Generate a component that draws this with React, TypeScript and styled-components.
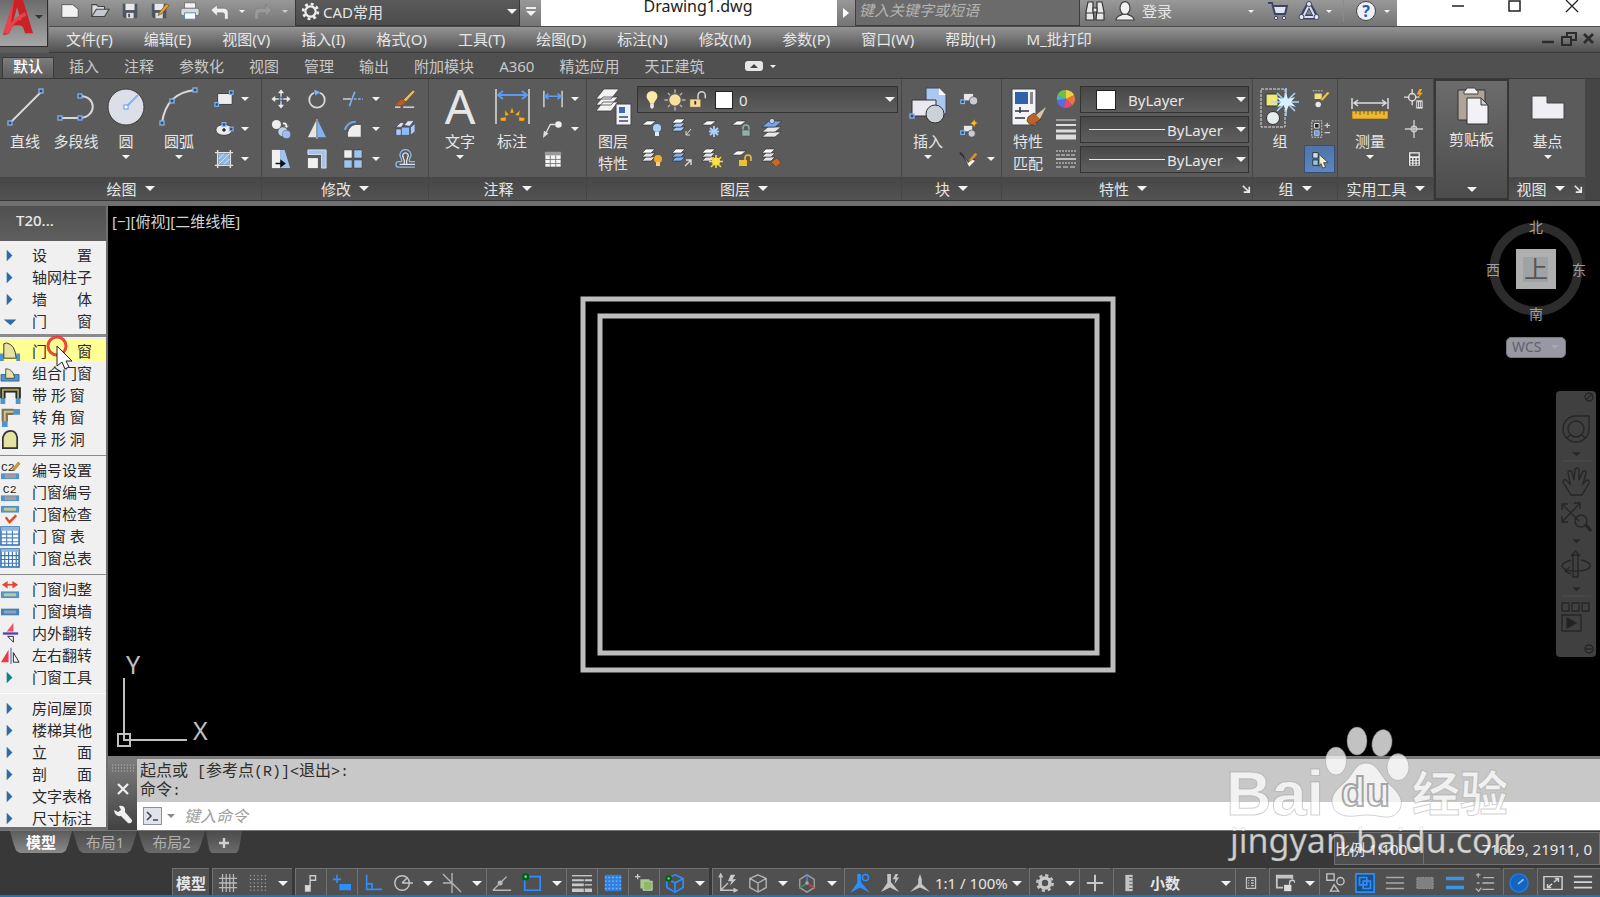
import React from "react";
import styled, { createGlobalStyle, css } from "styled-components";

const UI = `"Noto Sans", "Noto Sans CJK SC", sans-serif`;

const Global = createGlobalStyle`
  *, *::before, *::after { box-sizing: border-box; }
  html, body { margin: 0; height: 100%; overflow: hidden; background: #383838; }
  body { font-family: ${UI}; font-size: 15px; line-height: 22px; color: #e6e6e6; }
  button, select, input { font: inherit; color: inherit; background: none; border: 0; padding: 0; margin: 0; border-radius: 0; outline: none; }
  select { appearance: none; }
  svg { display: block; flex: none; }
`;

/* ---------- shell ---------- */
const Shell = styled.div`
  position: relative;
  display: flex;
  flex-direction: column;
  height: 100vh;
  overflow: hidden;
`;
const Header = styled.header`
  display: grid;
  grid-template-columns: 49px 1fr;
  grid-template-rows: 27px 26px;
`;
const LogoCell = styled.div`
  grid-row: 1 / 3;
  background: linear-gradient(#8a8a8a, #5a5a5a);
`;
const LogoButton = styled.button`
  display: flex;
  align-items: center;
  justify-content: space-between;
  width: 48px;
  height: 47px;
  padding: 0 4px 12px 2px;
  background: linear-gradient(#6c6c6c, #a6a6a6);
  border-right: 1px solid #2d2d2d;
  border-bottom: 1px solid #2d2d2d;
`;
const TitleBar = styled.div`
  display: flex;
  align-items: stretch;
  background: linear-gradient(#989898, #747474);
  border-bottom: 1px solid #4a4a4a;
`;
const QuickAccess = styled.div`
  display: flex;
  align-items: center;
  width: 246px;
  padding: 0 0 4px 6px;
`;
const IconButton = styled.button<{ $w?: number }>`
  display: flex;
  align-items: center;
  justify-content: center;
  width: ${(p) => p.$w ?? 30}px;
`;
const Caret = styled.span<{ $s?: number; $c?: string }>`
  flex: none;
  width: 0;
  height: 0;
  border-style: solid;
  border-color: ${(p) => p.$c ?? "#f2f2f2"} transparent transparent;
  border-width: ${(p) => p.$s ?? 5}px ${(p) => p.$s ?? 5}px 0;
`;
const Workspace = styled.label`
  display: flex;
  align-items: center;
  gap: 3px;
  width: 225px;
  padding: 0 2px 2px 5px;
  background: linear-gradient(#5a5a5a, #4c4c4c);
  border: 1px solid #383838;
  border-top: 0;
  select { flex: 1; }
`;
const Customize = styled.button`
  display: flex;
  flex-direction: column;
  align-items: center;
  justify-content: center;
  gap: 2px;
  width: 21px;
  padding-bottom: 4px;
  &::before { content: ""; width: 10px; height: 2px; background: #eee; }
`;
const DocTitle = styled.div`
  flex: 1;
  background: #fff;
  color: #222;
  font-size: 16px;
  line-height: 13px;
  text-align: center;
  padding-left: 18px;
`;
const Expand = styled.button`
  width: 18px;
  display: flex;
  align-items: center;
  justify-content: center;
`;
const Search = styled.input`
  width: 225px;
  padding: 0 3px 6px 3px;
  background: #6b6b6b;
  border: 1px solid #3e3e3e;
  border-top: 0;
  font-style: italic;
  &::placeholder { color: #b4b4b4; opacity: 1; }
`;
const Account = styled.div`
  display: flex;
  align-items: center;
  width: 317px;
  padding-bottom: 4px;
`;
const SignIn = styled.button`
  display: flex;
  align-items: center;
  justify-content: space-between;
  width: 122px;
  padding: 0 8px 0 2px;
`;
const Divider = styled.span`
  width: 1px;
  height: 22px;
  margin: 0 9px;
  background: #8a8a8a;
`;
const WindowButtons = styled.div`
  display: flex;
  width: 203px;
  background: #fff;
  padding: 0 0 13px 32px;
`;
const MenuBar = styled.nav`
  display: flex;
  align-items: center;
  gap: 31px;
  padding: 0 5px 2px 17px;
  background: linear-gradient(#949494, #505050);
  border-bottom: 1px solid #3a3a3a;
  button { white-space: nowrap; }
`;
const ChildWindow = styled.div`
  display: flex;
  align-items: center;
  gap: 6px;
  margin-left: auto;
`;

/* ---------- ribbon ---------- */
const TabBar = styled.div`
  display: flex;
  align-items: flex-end;
  flex: none;
  height: 26px;
  padding-left: 2px;
  background: #505050;
  border-bottom: 1px solid #3a3a3a;
`;
const Tab = styled.button<{ $on?: boolean }>`
  height: 21px;
  margin-right: 5px;
  padding: 0 10px 4px;
  line-height: 16px;
  color: #c8c8c8;
  ${(p) =>
    p.$on &&
    css`
      color: #fff;
      font-weight: 500;
      background: linear-gradient(#7c7c7c, #5d5d5d);
      border: 1px solid #3a3a3a;
      border-bottom: 0;
    `}
`;
const TabToggle = styled.button`
  display: flex;
  align-items: center;
  gap: 7px;
  height: 24px;
  margin-left: 26px;
`;
const Ribbon = styled.section`
  display: flex;
  flex: none;
  height: 122px;
  background: #454545;
  border-bottom: 1px solid #363636;
`;
const Panel = styled.div<{ $w: number }>`
  display: flex;
  flex-direction: column;
  width: ${(p) => p.$w}px;
  background: #5b5b5b;
  border-right: 1px solid #464646;
`;
const PanelBody = styled.div<{ $pad?: number }>`
  display: flex;
  flex: 1;
  padding: 5px 0 0 ${(p) => p.$pad ?? 0}px;
`;
const PanelTitle = styled.button`
  display: flex;
  align-items: center;
  justify-content: center;
  gap: 8px;
  height: 23px;
  background: linear-gradient(#474747, #525252);
  & > svg { margin-right: -6px; }
`;
const Launcher = styled.span<{ $offset: number }>`
  width: 0;
  svg { margin-left: ${(p) => p.$offset}px; }
`;
const Big = styled.button<{ $w: number }>`
  display: flex;
  flex-direction: column;
  align-items: center;
  flex: none;
  align-self: flex-start;
  width: ${(p) => p.$w}px;
  padding-top: 3px;
  white-space: nowrap;
  & > svg { margin-bottom: 3px; }
`;
const BigCaret = styled(Caret)`
  margin-top: 3px;
`;
const Tools = styled.div<{ $cols: string }>`
  display: grid;
  grid-template-columns: ${(p) => p.$cols};
  grid-auto-rows: 30px;
  align-content: start;
  button {
    display: flex;
    align-items: center;
    justify-content: center;
  }
`;
const ToolActive = styled.button`
  margin: 1px 0;
  background: linear-gradient(#4f74a8, #5f86bd);
  border: 1px solid #34507a;
`;
const LayerCol = styled.div`
  flex: 1;
  padding: 2px 3px 0 0;
`;
const Combo = styled.label`
  display: flex;
  align-items: center;
  height: 27px;
  padding: 0 2px 0 8px;
  background: linear-gradient(#484848, #5e5e5e);
  border: 1px solid #333;
  select { flex: 1; min-width: 0; }
`;
const LayerCombo = styled(Combo)`
  padding-left: 4px;
`;
const ComboStack = styled.div`
  display: flex;
  flex-direction: column;
  gap: 3px;
  flex: 1;
  padding: 2px 3px 0 0;
`;
const Swatch = styled.span<{ $s: number; $m: string }>`
  flex: none;
  width: ${(p) => p.$s}px;
  height: ${(p) => p.$s}px;
  margin: ${(p) => p.$m};
  background: #fff;
  border: 1px solid #222;
`;
const LineSample = styled.span`
  width: 76px;
  height: 1px;
  margin-right: 2px;
  background: #e8e8e8;
`;
const ClipPanel = styled.button`
  display: flex;
  flex-direction: column;
  align-items: center;
  width: 75px;
  padding: 5px 0 6px;
  background: linear-gradient(#6c6c6c, #4c4c4c);
  border: 2px solid #363636;
  & > svg { margin-bottom: 2px; }
  & > span:last-child { margin-top: auto; }
`;
const Strip = styled.div`
  flex: none;
  height: 5px;
  background: #707070;
`;

/* ---------- workspace ---------- */
const Main = styled.main`
  display: flex;
  flex: 1;
  min-height: 0;
  border-bottom: 1px solid #777;
`;
const Sidebar = styled.aside`
  position: relative;
  display: flex;
  flex-direction: column;
  width: 108px;
  flex: none;
  background: #f0f0f0;
  border-right: 2px solid #6e6e6e;
  border-bottom: 3px solid #6e6e6e;
  color: #2a2a2a;
  overflow: hidden;
`;
const SideTitle = styled.div`
  flex: none;
  height: 35px;
  padding: 3px 0 0 16px;
  background: linear-gradient(#505050, #5f5f5f);
  color: #e8e8e8;
  font-weight: 500;
`;
const SideGroup = styled.div<{ $top?: string }>`
  flex: none;
  padding: 3px 0 ${(p) => (p.$top ? 5 : 2)}px;
  border-top: ${(p) => p.$top ?? "0"};
`;
const SideRow = styled.button<{ $on?: boolean }>`
  display: flex;
  align-items: center;
  width: 100%;
  height: 22px;
  white-space: pre;
  background: ${(p) => (p.$on ? "#ffff94" : "none")};
  & > span { width: 32px; display: flex; }
`;
const Pointer = styled.svg`
  position: absolute;
  left: 44px;
  top: 129px;
`;
const Work = styled.div`
  display: flex;
  flex-direction: column;
  flex: 1;
  min-width: 0;
`;
const Canvas = styled.div`
  position: relative;
  flex: 1;
  background: #000;
  overflow: hidden;
`;
const ViewLabel = styled.div`
  padding: 4px;
  color: #d4d4d4;
`;
const Placed = styled.div<{ $at: string }>`
  position: absolute;
  inset: ${(p) => p.$at};
`;
const Wcs = styled.button`
  display: flex;
  align-items: center;
  justify-content: space-between;
  width: 60px;
  height: 21px;
  padding: 0 6px 2px 5px;
  border-radius: 5px;
  background: #9898a3;
  border: 1px solid #777783;
  color: #60606c;
  font-size: 14px;
`;
const CommandBox = styled.section`
  display: grid;
  grid-template-columns: 29px 1fr;
  flex: none;
  height: 74px;
  border-top: 3px solid #7a7a7a;
`;
const CommandGrip = styled.div`
  display: flex;
  flex-direction: column;
  align-items: center;
  justify-content: space-between;
  padding: 5px 0 5px;
  background: linear-gradient(#7d7d7d, #424242);
`;
const CommandMain = styled.div`
  display: flex;
  flex-direction: column;
  background: #fff;
`;
const History = styled.div`
  height: 43px;
  padding: 4px 3px 0;
  background: #c8c8c8;
  color: #2e2e2e;
  font: 16px/19px "Liberation Mono", "Noto Sans CJK SC", monospace;
  white-space: pre;
`;
const Latin = styled.span`
  font-size: 15px;
`;
const Prompt = styled.label`
  display: flex;
  flex: 1;
  align-items: center;
  gap: 5px;
  padding-left: 6px;
  color: #333;
  input {
    flex: 1;
    margin-left: 4px;
    font-style: italic;
    font-size: 16px;
  }
  input::placeholder { color: #a0a0a0; opacity: 1; }
`;

/* ---------- footer ---------- */
const SheetRow = styled.div`
  display: flex;
  justify-content: space-between;
  flex: none;
  height: 37px;
`;
const Sheets = styled.div`
  display: flex;
  padding-left: 10px;
`;
const Sheet = styled.button<{ $on?: boolean; $w: number }>`
  width: ${(p) => p.$w}px;
  height: 22px;
  line-height: 22px;
  margin-right: 1px;
  color: ${(p) => (p.$on ? "#fff" : "#b0b0b0")};
  font-weight: ${(p) => (p.$on ? 700 : 400)};
  background: ${(p) => (p.$on ? "linear-gradient(#5c5c5c, #8a8a8a)" : "linear-gradient(#4c4c4c, #6a6a6a)")};
  clip-path: polygon(0 0, 100% 0, 94% 60%, 90% 90%, 84% 100%, 16% 100%, 10% 90%, 6% 60%);
`;
const Readout = styled.div`
  display: flex;
  width: 266px;
  height: 33px;
  margin-top: 1px;
  background: #4e4e4e;
  border: 1px solid #707070;
  white-space: nowrap;
`;
const Coordinates = styled.span`
  flex: 1;
  padding-right: 7px;
  text-align: right;
  line-height: 32px;
  border-left: 1px solid #707070;
`;
const ScaleButton = styled.button`
  display: flex;
  align-items: center;
  gap: 5px;
  width: 88px;
`;
const StatusBar = styled.footer`
  display: flex;
  justify-content: flex-end;
  flex: none;
  height: 29px;
  background: linear-gradient(90deg, #383838 50%, #505050 50%);
  border-bottom: 2px solid #1f74b5;
`;
const StatusGroup = styled.div<{ $gap?: boolean }>`
  display: flex;
  align-items: center;
  flex: none;
  margin-left: ${(p) => (p.$gap ? 3 : 0)}px;
  background: #505050;
  border: 1px solid #727272;
  border-width: 1px 0 0 1px;
  button, select { height: 26px; padding-top: 2px; }
  &:last-child { padding-right: 2px; }
`;
const Model = styled.button`
  width: 36px;
  font-weight: 700;
`;
const Zoom = styled.button`
  width: 72px;
  white-space: nowrap;
`;
const Units = styled.select`
  width: 72px;
  padding-left: 6px;
  font-weight: 700;
`;
const Watermark = styled.div`
  position: absolute;
  right: 86px;
  bottom: 30px;
  width: 288px;
  height: 148px;
  pointer-events: none;
`;

/* ---------- drawings ---------- */
const B = "#7fb3f2";
const W = "#e4e4e8";
const N = ({ x, y }: { x: number; y: number }) => (
  <rect x={x - 2} y={y - 2} width="4" height="4" fill="#3c4c66" stroke={B} strokeWidth="1.3" />
);
const Sheet3 = ({ c = W }: { c?: string }) => (
  <g fill={c} stroke="#2e2e2e" strokeWidth=".6">
    <path d="M1 14h9l4-4H5z" />
    <path d="M1 10h9l4-4H5z" />
    <path d="M1 6h9l4-4H5z" fill="#fff" />
  </g>
);
const Sheet1 = () => <path d="M1 8h9l5-4H6z" fill="#fff" stroke="#2e2e2e" strokeWidth=".6" />;

const art: Record<string, React.ReactNode> = {
  /* quick access */
  new: <path d="M2 4h12l6 5v9H2z" fill="#f2f2f2" stroke="#555" />,
  open: <g stroke="#444" strokeWidth="1.2"><path d="M2 17V4h5l2 2h7v4" fill="#dcdcdc" /><path d="M2 17 7 9h14l-5 8z" fill="#c4c8cf" /></g>,
  save: <g><path d="M3 3h16v16H5l-2-2z" fill="#4d5561" /><path d="M6 3h10v7H6z" fill="#e8e8e8" /><path d="M7 13h8v6H7z" fill="#ddd" /><path d="M9 14h2v4H9z" fill="#4d5561" /></g>,
  saveas: <g><path d="M2 3h16v16H4l-2-2z" fill="#4d5561" /><path d="M5 3h10v7H5z" fill="#e8e8e8" /><path d="M6 13h8v6H6z" fill="#ddd" /><path d="m10 13 8-10 3 2-8 9-4 2z" fill="#e0a040" stroke="#6b4a1c" strokeWidth=".7" /></g>,
  print: <g><path d="M5 2h12v6H5z" fill="#f4f4f4" stroke="#555" strokeWidth=".7" /><rect x="1" y="8" width="20" height="8" rx="2" fill="#dadada" stroke="#555" strokeWidth=".7" /><path d="M5 13h12v7H5z" fill="#fff" stroke="#4f7fc0" /></g>,
  undo: <path d="M1 10 8 4v4h7q5 0 5 5v7h-4v-5q0-2-2-2H8v4z" fill="#eee" stroke="#666" strokeWidth=".6" />,
  redo: <path d="m21 10-7-6v4H7q-5 0-5 5v7h4v-5q0-2 2-2h6v4z" fill="#9a9a9a" stroke="#777" strokeWidth=".6" />,
  gear: <g fill="none" stroke="#eee"><circle cx="11" cy="11" r="6" strokeWidth="2.6" /><circle cx="11" cy="11" r="8.6" strokeWidth="3" strokeDasharray="3.4 3.35" /></g>,
  bino: <g fill="#e8e8e8" stroke="#333" strokeWidth="1.2"><path d="M4 2h5v7l1 11H2V12z" /><path d="M18 2h-5v7l-1 11h8V12z" /><path d="M2 13h8M12 13h8" /><path d="M9 8h4v4H9z" /></g>,
  user: <g fill="#f2f2f2" stroke="#444" strokeWidth="1.2"><path d="M2 20c0-4 4-4 7-6h4c3 2 7 2 7 6z" /><ellipse cx="11" cy="8" rx="5" ry="6.4" /></g>,
  cart: <g fill="none" stroke="#3c4366"><path d="M1 3h4l3 11h10l2-8H7" strokeWidth="2" fill="#e4e4ee" /><circle cx="9" cy="18" r="1.6" fill="#fff" /><circle cx="17" cy="18" r="1.6" fill="#fff" /></g>,
  tri: <g fill="none"><path d="M11 4 4 17h14z" stroke="#3c4366" strokeWidth="5" strokeLinejoin="round" /><path d="M11 5 5 17h12z" stroke="#e0e0ec" strokeWidth="2" strokeLinejoin="round" /><g fill="#e8e8f2" stroke="#3c4366"><circle cx="11" cy="4" r="2.5" /><circle cx="3.5" cy="17" r="2.5" /><circle cx="18.5" cy="17" r="2.5" /></g></g>,
  /* draw */
  rect: <g><path d="M4 5h16v12H4z" fill="#ececf0" stroke="#3a3a3a" /><N x={19} y={4} /><N x={3} y={17} /></g>,
  ellipse: <g><ellipse cx="11" cy="12" rx="9" ry="6" fill="#ececf0" stroke="#3a3a3a" /><path d="M9 12h4M11 10v4" stroke="#222" strokeWidth="1.6" /><N x={11} y={6} /><N x={19} y={11} /></g>,
  hatch: <g><path d="M5 5h12v12H5z" fill="#8fb4e6" /><path d="m5 11 6-6M5 17 17 5m-6 12 6-6" stroke="#dce8fa" /><path d="M1 4h20M1 18h20M4 1v20M18 1v20" stroke="#e2e2e2" strokeWidth="1.5" /></g>,
  /* modify */
  move: <g fill="#ececec" stroke="#3a3a3a" strokeWidth=".5"><path d="m11 0 4 5h-3v4h-2V5H7zM11 22l4-5h-3v-4h-2v4H7zM0 11l5-4v3h4v2H5v3zM22 11l-5-4v3h-4v2h4v3z" /><rect x="9" y="9" width="4" height="4" fill={B} /></g>,
  rotate: <g fill="none"><circle cx="11" cy="12" r="8.5" stroke="#d8d8d8" strokeWidth="2" /><path d="m7 0 8 3-6 5z" fill={B} stroke="#334" strokeWidth=".5" /></g>,
  trim: <g strokeWidth="1.5"><path d="M0 11h9" stroke="#ddd" /><path d="M12 11h10" stroke={B} strokeDasharray="3 1.5" /><path d="M7 19 13 3" stroke={B} strokeWidth="1.7" /></g>,
  brush: <g><path d="m20 1 2 2-10 11-3-2z" fill="#eebf58" stroke="#5a3a14" strokeWidth=".6" /><path d="M9 12c-4-1-5 3-8 5 4 2 9 1 10-3z" fill="#c05a22" /><path d="M0 20h6M9 20h12" stroke="#eee" strokeWidth="1.5" /></g>,
  copy: <g><circle cx="6" cy="6" r="5" fill="#eee" /><path d="M13 4q5-1 5 4l2-1-3 3-3-3 2 1q0-3-3-2z" fill="#eee" /><circle cx="13" cy="14" r="5" fill="#b9d2f2" /><circle cx="17" cy="17" r="4.5" fill="#9dc0ee" stroke="#556" strokeWidth=".5" /></g>,
  mirror: <g><path d="M10 2v18H1z" fill="#e4e4e4" /><path d="M12 2v18h9z" fill={B} /><path d="M11 0v22" stroke="#ddd" /></g>,
  fillet: <g><path d="M5 20V15Q7 7 14 6h6v14z" fill="#eee" stroke="#333" strokeWidth=".7" /><path d="M2 12Q5 3 14 3" fill="none" stroke="#6ea4ea" strokeWidth="2.4" /></g>,
  explode: <g stroke="#334" strokeWidth=".6"><path d="M1 11h6v7H1z" fill="#a9c9f2" /><path d="M7 9h9v9H7z" fill="#8fbcf0" /><path d="m1 9 5-5h4l-3 5zM10 7l4-5h7l-5 6z" fill="#dbe8fa" /><path d="m17 9 5-4v9l-5 4z" fill="#a9c9f2" /></g>,
  stretch: <g><path d="M1 1h9v20H1z" fill="#f0f0f0" /><path d="M10 1h5l6 20H10z" fill="#9fc4ee" /><path d="M5 16h8M11 13l4 3-4 3z" stroke="#111" strokeWidth="1.6" fill="#111" /></g>,
  scale: <g><path d="M1 1h20v20h-5V6H1z" fill="#a9c3e8" stroke="#d8e4f6" /><path d="M1 10h11v11H1z" fill="#f0f0f0" /></g>,
  array: <g fill="#9fc4ee" stroke="#333" strokeWidth=".6"><path d="M1 1h9v9H1z" fill="#eee" /><path d="M12 1h9v9h-9zM1 12h9v9H1zM12 12h9v9h-9z" /></g>,
  offset: <g fill="none" strokeWidth="1.4"><path d="M22 20H4q-3 0-3-3t3-3h3q1-2-1-5a6 6 0 1 1 11 0q-2 3-1 5h6" stroke="#8fb8ec" /><path d="M22 17H5h5q1-4-1-8a3 3 0 1 1 5 0q-2 4-1 8" stroke="#e4e4e4" /></g>,
  /* annotate */
  lin: <g><path d="M1 2v18M21 2v18" stroke="#ddd" strokeWidth="1.5" /><path d="M3 8h16M6 5 2 8l4 3M16 5l4 3-4 3" stroke="#5e9bf0" strokeWidth="1.8" fill="none" /></g>,
  leader: <g><circle cx="17" cy="6" r="3.6" fill="#eee" /><path d="M14 6H8L3 16" fill="none" stroke="#ddd" strokeWidth="1.5" /><path d="m0 21 1-8 5 3z" fill="#ddd" /></g>,
  table: <g><path d="M2 3h18v17H2z" fill="#f4f4f4" stroke="#444" /><path d="M2 3h18v4H2z" fill="#9a9a9a" /><path d="M8 7v13M14 7v13M2 11.5h18M2 16h18" stroke="#777" /></g>,
  /* layers */
  l1: <g><Sheet1 /><circle cx="16" cy="11" r="4" fill="#a8d0fa" /><path d="M14 15h4v4h-4z" fill="#dceafc" /></g>,
  l2: <g><Sheet3 c="#a8c8f4" /><path d="m20 12-5 6m0-4v4h4" stroke="#ddd" fill="none" /></g>,
  l3: <g><Sheet1 /><g stroke="#a8d0fa" strokeWidth="1.8"><path d="M13 9v11M8 14.5h10M9 11l8 7M17 11l-8 7" /></g></g>,
  l4: <g><Sheet1 /><path d="M12 13v-2a3 3 0 0 1 6 0v2" fill="none" stroke="#8fb0a8" strokeWidth="1.6" /><path d="M11 13h8v6h-8z" fill="#8fb0a8" stroke="#445" strokeWidth=".5" /></g>,
  l5: <g stroke="#2e2e2e" strokeWidth=".6"><path d="M1 20h13l6-5H7z" fill="#e8e8e8" /><path d="M1 15h13l6-5H7z" fill="#e8e8e8" /><path d="M1 10h13l7-6H8z" fill="#77a5e8" /><circle cx="11" cy="4" r="2.6" fill="#b8d2f6" /></g>,
  l6: <g><Sheet3 /><circle cx="17" cy="12" r="4" fill="#f5a832" /><path d="M15 15h4v4h-4z" fill="#f8d080" /></g>,
  l7: <g><Sheet3 c="#7fb0f0" /><path d="m14 19 6-6m-5 0h5v5" stroke="#ddd" fill="none" strokeWidth="1.4" /></g>,
  l8: <g><Sheet3 /><g stroke="#f8d838" strokeWidth="1.6"><path d="M15 8v13M8 14.5h14M10 10l10 10M20 10 10 20" /></g><circle cx="15" cy="14.5" r="4" fill="#fbe04a" /></g>,
  l9: <g><Sheet1 /><path d="M8 13h8v6H8z" fill="#f0c02a" /><path d="M14 13v-2a3 3 0 0 1 6 0v3" fill="none" stroke="#f0c02a" strokeWidth="1.6" /></g>,
  l10: <g><Sheet3 /><path d="m10 15 6-4 4 5-5 4z" fill="#c9692c" stroke="#5a2e10" strokeWidth=".5" /></g>,
  bulb: <g><path d="M11 1a6 6 0 0 1 6 6c0 3-3 5-4 8H9c-1-3-4-5-4-8a6 6 0 0 1 6-6z" fill="#fbe9a6" /><path d="M9 15h4v4l-2 2-2-2z" fill="#e8e8e8" /></g>,
  sun: <g stroke="#b8b2a2" strokeWidth="1.2"><path d="M11 2v18M2 11h18M5 5l12 12M17 5 5 17" /><circle cx="11" cy="11" r="5.4" fill="#f8dfa0" stroke="#5b5b5b" /></g>,
  lock: <g><path d="M2 10h12v9H2z" fill="#f4dc98" stroke="#5c4c1c" strokeWidth=".6" /><path d="M8 12v4" stroke="#333" strokeWidth="2" /><path d="M11 10V6a4 4 0 0 1 8 0v3" fill="none" stroke="#d0d0d0" strokeWidth="1.7" /></g>,
  /* blocks */
  b1: <g stroke="#444" strokeWidth=".7"><path d="M5 5h11v8H5z" fill="#e8e8ec" /><circle cx="16" cy="13" r="4.5" fill="#c9ccd4" /><N x={4} y={14} /></g>,
  b2: <g stroke="#444" strokeWidth=".7"><path d="M5 7h10v7H5z" fill="#e8e8ec" /><circle cx="14" cy="16" r="4" fill="#c9ccd4" /><N x={4} y={15} /><path d="m17 0 1 3 3 1-3 2-1 3-2-3-3-1 3-2z" fill="#f5b840" stroke="#8a5a10" /></g>,
  b3: <g><path d="m1 4 4 4 6 9 6-6" fill="none" stroke="#2e2e2e" strokeWidth="2" /><path d="m5 7 6 13 7-7-4-2-4 4z" fill="#f4f4f4" stroke="#333" strokeWidth=".5" /><path d="m11 12 7-8 2 2-7 8z" fill="#e0902a" /></g>,
  wheel: <g><path d="M11 11 1.5 7A10 10 0 0 1 11 1z" fill="#6fc04a" /><path d="M11 11V1a10 10 0 0 1 9 6z" fill="#f0d040" /><path d="m11 11 9-4a10 10 0 0 1-2 11z" fill="#e8783a" /><path d="m11 11 7 7a10 10 0 0 1-10 2.500z" fill="#e04a78" /><path d="m11 11-3 9.500A10 10 0 0 1 1 12z" fill="#5a6ae0" /><path d="m11 11-10 1a10 10 0 0 1 .5-5z" fill="#4ab0d8" /></g>,
  /* group and utilities */
  g1: <g><path d="M3 2h12" stroke="#ccc" strokeDasharray="2 1" /><path d="M5 5h8v6H5z" fill="#f0e27a" /><circle cx="9" cy="17" r="3" fill="#e8e8e8" /><path d="m11 12 8-9 3 1-8 9z" fill="#e8c050" stroke="#553" strokeWidth=".5" /></g>,
  g2: <g><path d="M2 2h11v18H2z" fill="none" stroke="#ddd" strokeDasharray="2 1.2" /><path d="M5 5h5v5H5z" fill="#222" stroke="#eee" /><path d="M5 13h5v5H5z" fill="#6a9be0" stroke="#bcd" /><path d="M16 7h6M19 4v6M16 15h6" stroke="#ccc" strokeWidth="1.4" /></g>,
  g3: <g><path d="M3 4h6v6H3z" fill="#d8dce0" stroke="#233" /><path d="M3 12h6v6H3z" fill="#9cc0e8" stroke="#233" /><path d="m10 6 10 9h-5l2 5-3 1-2-5-2 3z" fill="#f2f2c8" stroke="#233" strokeWidth=".8" /></g>,
  u1: <g stroke="#ddd" strokeWidth="1.5" fill="none"><circle cx="9" cy="9" r="4" /><path d="M9 0v6M9 12v6M0 9h6M12 9h5" /><path d="m17 0-3 6h3l-2 4 6-6h-3l2-4z" fill="#f5a020" stroke="none" /><path d="M13 12h8v10h-8z" fill="#eee" stroke="#555" strokeWidth="1" /><path d="M15 14v6M17 14v6M19 14v6" stroke="#555" strokeWidth="1" /></g>,
  u2: <g stroke="#ccc" strokeWidth="1.5" fill="none"><circle cx="11" cy="11" r="3" /><path d="M11 1v20M1 11h20" /></g>,
  u3: <g><path d="M5 3h13v16H5z" fill="#eee" stroke="#444" /><path d="M7 5h9v3H7z" fill="#555" /><path d="M7 11h9M7 14h9M7 17h9" stroke="#555" strokeWidth="2" strokeDasharray="2 1.5" /></g>,
  launch: <path d="m1 3 6 6M8 4v6H2" fill="none" stroke="#e8e8e8" strokeWidth="1.8" />,
  /* status bar */
  sgrid: <path d="M1 6h20M1 11h20M1 16h20M5 1v20M9 1v20M13 1v20M17 1v20" stroke="#b8b8b8" strokeWidth="1.4" />,
  sdots: <path d="M2 3h18M2 7h18M2 11h18M2 15h18M2 19h18" stroke="#a8a8a8" strokeWidth="1.3" strokeDasharray="1.5 2.6" />,
  infer: <g fill="none" stroke="#ccc" strokeWidth="1.5"><path d="M10 15V3h6v5h-6" /><path d="M5 14h5v6H5z" fill="#ddd" /></g>,
  dyn: <g stroke="#2d8fff" strokeWidth="1.8"><path d="M1 7h9M5.500 2v9" /><path d="M9 13h11v5H9z" fill="#2d8fff" /></g>,
  ortho: <path d="M4 2v16h17M4 12h6v6" stroke="#2d8fff" strokeWidth="1.8" fill="none" />,
  polar: <g fill="none" stroke="#c4c4c4" strokeWidth="1.6"><circle cx="10" cy="11" r="8" /><path d="M10 11h12M10 11l6-6" /></g>,
  iso: <path d="m1 1 20 20M11 0v22M1 11h10" stroke="#b4b4b4" strokeWidth="1.5" fill="none" />,
  track: <g stroke="#b8b8b8" strokeWidth="1.5" fill="none"><path d="M1 19h20M1 19 16 4" /><circle cx="9" cy="11" r="2" fill="#bbb" /></g>,
  osnap: <g><path d="M3 4h17v15H3z" fill="none" stroke="#2d8fff" strokeWidth="1.8" /><circle cx="4" cy="4" r="4" fill="#0a5a1a" /><circle cx="4" cy="4" r="1.5" fill="#5de06a" /></g>,
  lw: <g stroke="#c8c8c8"><path d="M0 3h22" strokeWidth="1.5" /><path d="M0 8h13M14 8h8" strokeWidth="2.4" /><path d="M0 13h13" strokeWidth="3" /><path d="M14 13h8" strokeWidth="1.5" /><path d="M0 19h13M14 19h8" strokeWidth="4" /></g>,
  transp: <g><path d="M2 2h18v18H2z" fill="#2f7fe0" /><path d="M2 5h18M2 9h18M2 13h18M2 17h18" stroke="#7ab4f8" strokeDasharray="2 2" strokeWidth="1.5" /></g>,
  cyc: <g><path d="M10 9h10v10H10z" fill="#8fb86a" stroke="#ccd8b8" /><path d="M7 7h10v3H10v7H7z" fill="#a8c88a" /><path d="M1 4h6M4 1v6" stroke="#ccc" strokeWidth="1.4" /></g>,
  cubeb: <g fill="none" stroke="#2d8fff" strokeWidth="1.8"><path d="M11 2l9 4v10l-9 5-9-5V6zM2 6l9 5 9-5M11 11v10" /><circle cx="4" cy="6" r="3.6" fill="#0a5a1a" stroke="none" /><circle cx="4" cy="6" r="1.3" fill="#5de06a" stroke="none" /></g>,
  ucsd: <g stroke="#c4c4c4" strokeWidth="1.5" fill="none"><path d="M3 2v17h17M3 19l8-8M1 5l2-4 2 4M17 17l4 2-4 2" /><path d="m14 2-3 7h4l-2 5 7-7h-4l3-5z" fill="#ccc" stroke="none" /></g>,
  cubeg: <path d="M11 2l9 4v10l-9 5-9-5V6zM2 6l9 5 9-5M11 11v10" fill="none" stroke="#b4b4b4" strokeWidth="1.5" />,
  gizmo: <g fill="none" strokeWidth="1.5"><path d="M11 2l8 5v9l-8 5-8-5V7z" stroke="#a0a0a0" /><path d="M11 1v9" stroke="#4a8ae0" /><path d="m10 12-8 5" stroke="#3aa04a" /><path d="m12 12 8 5" stroke="#d04a3a" /><circle cx="11" cy="11" r="2" fill="#aaa" stroke="none" /></g>,
  annb: <g fill="#2d8fff"><path d="M8 1h4v9l10 12-11-6-11 6 8-11z" /><circle cx="17" cy="5" r="3.4" fill="none" stroke="#2d8fff" strokeWidth="1.6" /></g>,
  annx: <g fill="#c4c4c4"><path d="M8 1h4v9l9 11-10-5-10 5 7-10z" /><path d="m17 1-3 6h3l-1 5 5-7h-3l2-4z" /></g>,
  ann: <path d="M9 7l2-6 2 6v5l9 9-11-5-11 5 9-9z" fill="#c4c4c4" />,
  gears: <g fill="none" stroke="#c8c8c8"><circle cx="11" cy="11" r="5.5" strokeWidth="4" /><circle cx="11" cy="11" r="8.5" strokeWidth="2.6" strokeDasharray="3.4 3.28" /></g>,
  plus: <path d="M11 2v18M2 11h18" stroke="#c8c8c8" strokeWidth="2.2" />,
  ruler: <g><path d="M7 2h8v18H7z" fill="#c4c4c4" /><path d="M11 5h4M11 9h4M11 13h4M11 17h4" stroke="#555" /></g>,
  qp: <g fill="none" stroke="#c4c4c4" strokeWidth="1.4"><path d="M6 5h10v12H6z" /><path d="M8 8h1M8 11h1M8 14h1M11 8h3M11 11h3M11 14h3" /></g>,
  lockui: <g><path d="M9 16H2V3h17v4M2 5h17" fill="none" stroke="#c4c4c4" strokeWidth="2" /><path d="M10 13h8v7h-8z" fill="#ddd" /><path d="M16 13v-2a3 3 0 0 1 6 0" fill="none" stroke="#ccc" strokeWidth="1.5" /></g>,
  isol: <g fill="none" stroke="#c4c4c4" strokeWidth="1.5"><path d="M2 1h8v7H2zM6 20l4-7 5 7z" /><circle cx="17" cy="9" r="4" /></g>,
  hw: <g fill="none" stroke="#2d8fff" strokeWidth="1.8"><path d="M1 1h20v20H1z" fill="#1f4f80" /><path d="M5 5h8v8H5zM9 9h8v8H9z" /></g>,
  ln: <path d="M1 5h20M1 11h20M1 17h20" stroke="#a8a8a8" strokeWidth="1.6" />,
  box: <path d="M2 5h18v12H2z" fill="#808080" stroke="#999" strokeDasharray="2 1" />,
  bars: <path d="M1 6h20M1 16h20" stroke="#3a94e8" strokeWidth="4" />,
  lst: <path d="M9 5h12M8 11h13M8 18h13M1 2h5M3.500 0v5M2 11h3M1 17l3 3 3-4" stroke="#b4b4b4" strokeWidth="1.4" fill="none" />,
  perf: <g><circle cx="11" cy="11" r="10" fill="#1565c0" stroke="#1f7fe8" strokeWidth="1.5" /><path d="m10 12 6-5" stroke="#8ec4ff" strokeWidth="1.8" /></g>,
  full: <g fill="none" stroke="#d0d0d0" strokeWidth="1.6"><path d="M1 4h20v14H1z" /><path d="M12 10l5-4M13 6h4v4M10 12l-5 4M5 12v4h4" /></g>,
  menu: <path d="M1 4h20M1 10h20M1 16h20" stroke="#d4d4d4" strokeWidth="2" />,
  /* sidebar */
  door: <g><path d="M0 13h4v8H0zM17 13h4v8h-4z" fill="#4f94cc" /><path d="M4 18V3l3-1q9 2 10 16z" fill="#e6e2a0" stroke="#333" /></g>,
  door2: <g><path d="M1 12h19v7H1z" fill="#4f94cc" stroke="#24527a" strokeWidth=".7" /><path d="M6 16V6q7 0 9 8v2z" fill="#e6e2a0" stroke="#333" strokeWidth=".8" /></g>,
  band: <g fill="none"><path d="M3 20V5h16v15" stroke="#4f94cc" strokeWidth="5" /><path d="M3 14V5h16v9" stroke="#2a2a22" strokeWidth="5.5" /><path d="M3 14V5h16v9" stroke="#a8a060" strokeWidth="2" /></g>,
  corner: <g fill="none"><path d="M5 21V5h16" stroke="#4f94cc" strokeWidth="6" /><path d="M5 15V5h9" stroke="#7c7450" strokeWidth="6.5" /><path d="M5 15V5h9" stroke="#d0c890" strokeWidth="2" /></g>,
  arch: <path d="M3 20V9q2-7 8-7t7 7v11z" fill="#e6e2a0" stroke="#333" strokeWidth="1.8" />,
  c2: <g><text x="3" y="11" fontSize="12" fill="#222" fontFamily="Liberation Mono">C2</text><path d="M1 14h19v6H1z" fill="#4f94cc" /><path d="M5 15h12v4H5z" fill="#a89a98" /></g>,
  c2e: <g><text x="1" y="11" fontSize="12" fill="#222" fontFamily="Liberation Mono">C2</text><path d="m13 10 6-8 2 2-6 7z" fill="#d8a030" stroke="#6a4a10" strokeWidth=".5" /><path d="M1 14h19v6H1z" fill="#4f94cc" /><path d="M5 15h12v4H5z" fill="#a89a98" /></g>,
  check: <g><path d="M1 2h19v7H1z" fill="#4f94cc" /><path d="M4 4h13v3H4z" fill="#c8c890" /><path d="m6 14 4 5 7-7" fill="none" stroke="#e04a22" strokeWidth="2.5" /></g>,
  tb1: <g><path d="M1 1h19v19H1z" fill="#fff" stroke="#2e6cb0" strokeWidth="1.6" /><path d="M1 1h19v4H1z" fill="#8cb4dc" /><path d="M7 5v15M13 5v15M1 8.500h19M1 12.500h19M1 16.500h19" stroke="#4a84c4" strokeWidth="1.2" /></g>,
  tb2: <g><path d="M1 1h19v19H1z" fill="#fff" stroke="#2e6cb0" strokeWidth="1.6" /><path d="M1 1h19v3H1z" fill="#8cb4dc" /><path d="M5 4v16M9 4v16M13 4v16M17 4v16M1 8h19M1 12h19M1 16h19" stroke="#3a74b4" strokeWidth="1.2" /></g>,
  tidy: <g><path d="M4 6h13" stroke="#e04a30" strokeWidth="1.8" /><path d="M8 2v8L2 6zM13 2v8l6-4z" fill="#e04a30" /><path d="M1 13h19v7H1z" fill="#4f94cc" /><path d="M4 15h13v3H4z" fill="#c8c890" /></g>,
  fillw: <g><path d="M1 8h19v7H1z" fill="#3f84bc" /><path d="M4 10h13v3H4z" fill="#9aa0b0" /></g>,
  fv: <g><path d="M14 0v9H7z" fill="#f05060" /><path d="M3 11h16" stroke="#5a3ab0" strokeWidth="2.4" /><path d="M8 14h6v6z" fill="#fff" stroke="#222" /></g>,
  fh: <g><path d="M9 5v13H1z" fill="#f03848" /><path d="M11.500 3v17" stroke="#5a6ab0" strokeWidth="1.2" /><path d="M14 8v10h6z" fill="#fff" stroke="#222" /></g>,
  right: <path d="m7 5 6 6-6 6z" fill="#2f6ba6" />,
  rightg: <path d="m7 5 6 6-6 6z" fill="#128080" />,
  down: <path d="M4 9h13l-6 6z" fill="#2f6ba6" />,
};

const Icon = ({ n, s = 22 }: { n: string; s?: number }) => (
  <svg width={s} height={s} viewBox={n === "launch" ? "0 0 10 12" : "0 0 22 22"} aria-hidden="true">{art[n]}</svg>
);
const BigArt = ({ children }: { children: React.ReactNode }) => (
  <svg width="40" height="40" viewBox="0 0 40 40" overflow="visible" aria-hidden="true">{children}</svg>
);
const Tool = ({ n, s = 20 }: { n: string; s?: number }) => (
  <button aria-label={n}><Icon n={n} s={s} /></button>
);
const Drop = () => <button aria-label="more"><Caret $s={4} /></button>;

const menus = ["文件(F)", "编辑(E)", "视图(V)", "插入(I)", "格式(O)", "工具(T)", "绘图(D)", "标注(N)", "修改(M)", "参数(P)", "窗口(W)", "帮助(H)", "M_批打印"];
const tabs = ["默认", "插入", "注释", "参数化", "视图", "管理", "输出", "附加模块", "A360", "精选应用", "天正建筑"];

const side: { top?: string; rows: [string, string][] }[] = [
  { rows: [["right", "设　　置"], ["right", "轴网柱子"], ["right", "墙　　体"], ["down", "门　　窗"]] },
  { top: "3px solid #8a8a8a", rows: [["door", "门　　窗"], ["door2", "组合门窗"], ["band", "带 形 窗"], ["corner", "转 角 窗"], ["arch", "异 形 洞"]] },
  { top: "1px solid #8a8a8a", rows: [["c2e", "编号设置"], ["c2", "门窗编号"], ["check", "门窗检查"], ["tb1", "门 窗 表"], ["tb2", "门窗总表"]] },
  { top: "1px solid #8a8a8a", rows: [["tidy", "门窗归整"], ["fillw", "门窗填墙"], ["fv", "内外翻转"], ["fh", "左右翻转"], ["rightg", "门窗工具"]] },
  { top: "1px solid #fff", rows: [["right", "房间屋顶"], ["right", "楼梯其他"], ["right", "立　　面"], ["right", "剖　　面"], ["right", "文字表格"], ["right", "尺寸标注"]] },
];

/* "v" stands for a drop-down arrow beside the icon before it */
const status: { gap?: boolean; items: string[] }[] = [
  { items: ["MODEL"] },
  { gap: true, items: ["sgrid", "sdots", "v"] },
  { gap: true, items: ["infer"] },
  { items: ["dyn"] },
  { items: ["ortho", "polar", "v", "iso", "v"] },
  { items: ["track", "osnap", "v"] },
  { items: ["lw"] },
  { items: ["transp"] },
  { items: ["cyc"] },
  { items: ["cubeb", "v"] },
  { gap: true, items: ["ucsd", "cubeg", "v", "gizmo", "v"] },
  { gap: true, items: ["annb", "annx", "ann", "ZOOM", "v"] },
  { gap: true, items: ["gears", "v"] },
  { items: ["plus"] },
  { gap: true, items: ["ruler", "UNITS", "v"] },
  { items: ["qp"] },
  { gap: true, items: ["lockui", "v"] },
  { items: ["isol", "hw", "ln", "box", "bars", "lst"] },
  { gap: true, items: ["perf"] },
  { gap: true, items: ["full", "menu"] },
];

const StatusItem = ({ id }: { id: string }) => {
  if (id === "MODEL") return <Model>模型</Model>;
  if (id === "ZOOM") return <Zoom>1:1 / 100%</Zoom>;
  if (id === "UNITS") return <Units aria-label="units"><option>小数</option></Units>;
  if (id === "v") return <IconButton $w={19} aria-label="more"><Caret /></IconButton>;
  return <IconButton aria-label={id}><Icon n={id} s={20} /></IconButton>;
};

function TopBars() {
  return (
    <Header>
      <LogoCell>
        <LogoButton aria-label="application menu">
          <svg width="32" height="35" viewBox="0 0 32 38" preserveAspectRatio="none">
            <path d="M12 0h9l10 36h-8l-2-7q-6-3-11 0l-3 8-6 1z" fill="#cc2027" />
            <path d="m15 8 4 14q-5-1-8 2z" fill="#8a8a8a" />
            <path d="M12 0 1 36l6 1q2-12 17-20l-1-4Q14 18 9 25z" fill="#e8434a" />
          </svg>
          <Caret $s={4} $c="#333" />
        </LogoButton>
      </LogoCell>
      <TitleBar>
        <QuickAccess>
          {["new", "open", "save", "saveas", "print", "undo"].map((n) => <IconButton key={n} aria-label={n}><Icon n={n} s={20} /></IconButton>)}
          <IconButton $w={13} aria-label="undo list"><Caret $s={3} /></IconButton>
          <IconButton aria-label="redo"><Icon n="redo" s={20} /></IconButton>
          <IconButton $w={14} aria-label="redo list"><Caret $s={3} $c="#ccc" /></IconButton>
        </QuickAccess>
        <Workspace>
          <Icon n="gear" s={19} />
          <select aria-label="workspace"><option>CAD常用</option></select>
          <Caret />
        </Workspace>
        <Customize aria-label="customize"><Caret /></Customize>
        <DocTitle>Drawing1.dwg</DocTitle>
        <Expand aria-label="expand"><svg width="6" height="10"><path d="m0 0 6 5-6 5z" fill="#fff" /></svg></Expand>
        <Search aria-label="search" placeholder="键入关键字或短语" />
        <Account>
          <IconButton aria-label="find"><Icon n="bino" /></IconButton>
          <IconButton aria-label="account"><Icon n="user" /></IconButton>
          <SignIn>登录<Caret $s={3} /></SignIn>
          <IconButton $w={32} aria-label="store"><Icon n="cart" /></IconButton>
          <IconButton aria-label="connect"><Icon n="tri" /></IconButton>
          <IconButton $w={10} aria-label="connect menu"><Caret $s={3} /></IconButton>
          <Divider />
          <IconButton $w={26} aria-label="help">
            <svg width="22" height="22" viewBox="0 0 22 22">
              <circle cx="11" cy="11" r="9.5" fill="#f0f0f4" stroke="#444" />
              <text x="11" y="17" textAnchor="middle" fontSize="16" fontWeight="700" fill="#2a58b8" fontFamily="Noto Sans">?</text>
            </svg>
          </IconButton>
          <IconButton $w={16} aria-label="help menu"><Caret $s={3} /></IconButton>
        </Account>
        <WindowButtons>
          <IconButton $w={57} aria-label="minimize"><svg width="14" height="14"><path d="M1 6h12" stroke="#222" strokeWidth="1.5" /></svg></IconButton>
          <IconButton $w={57} aria-label="maximize"><svg width="14" height="14"><path d="M1 1h11v10H1z" fill="none" stroke="#222" strokeWidth="1.5" /></svg></IconButton>
          <IconButton $w={57} aria-label="close"><svg width="14" height="14"><path d="m1 0 12 12M13 0 1 12" stroke="#222" strokeWidth="1.3" /></svg></IconButton>
        </WindowButtons>
      </TitleBar>
      <MenuBar>
        {menus.map((m) => <button key={m}>{m}</button>)}
        <ChildWindow>
          <button aria-label="minimize drawing"><svg width="14" height="14"><path d="M1 10h12" stroke="#2c2c2c" strokeWidth="2.4" /></svg></button>
          <button aria-label="restore drawing"><svg width="16" height="14"><path d="M6 5V1h9v7h-4M1 5h9v8H1z" fill="none" stroke="#2c2c2c" strokeWidth="2" /></svg></button>
          <button aria-label="close drawing"><svg width="12" height="12"><path d="m1 1 9 9M10 1l-9 9" stroke="#2c2c2c" strokeWidth="2.8" /></svg></button>
        </ChildWindow>
      </MenuBar>
    </Header>
  );
}

function RibbonArea() {
  return (
    <>
      <TabBar>
        {tabs.map((t, i) => <Tab key={t} $on={i === 0}>{t}</Tab>)}
        <TabToggle aria-label="minimize ribbon">
          <svg width="18" height="11"><rect width="18" height="10" rx="3" fill="#e6e6e6" /><path d="M5 7h8L9 3z" fill="#444" /></svg>
          <Caret $s={3} />
        </TabToggle>
      </TabBar>
      <Ribbon>
        <Panel $w={262}>
          <PanelBody>
            <Big $w={50}>
              <BigArt><path d="M5 36 37 4" stroke="#d8d8d8" strokeWidth="2" /><N x={5} y={36} /><N x={36} y={4} /></BigArt>直线
            </Big>
            <Big $w={52}>
              <BigArt><path d="M4 31h20c17-1 17-22 0-22" fill="none" stroke="#d8d8d8" strokeWidth="2" /><N x={4} y={31} /><N x={24} y={31} /><N x={24} y={9} /></BigArt>多段线
            </Big>
            <Big $w={48}>
              <BigArt><circle cx="20" cy="20" r="18" fill="#dcdfe8" stroke="#3c3c3c" /><path d="M20 20 32 8" stroke={B} strokeWidth="2" /><rect x="18" y="18" width="4" height="4" fill="#fff" stroke="#5a9af0" /></BigArt>圆<BigCaret $s={4} />
            </Big>
            <Big $w={58}>
              <BigArt><path d="M3 36Q7 6 36 3" fill="none" stroke="#d8d8d8" strokeWidth="2" /><N x={3} y={36} /><N x={13} y={14} /><N x={36} y={3} /></BigArt>圆弧<BigCaret $s={4} />
            </Big>
            <Tools $cols="31px 12px">
              <Tool n="rect" /><Drop /><Tool n="ellipse" /><Drop /><Tool n="hatch" /><Drop />
            </Tools>
          </PanelBody>
          <PanelTitle>绘图<Caret /></PanelTitle>
        </Panel>
        <Panel $w={167}>
          <PanelBody $pad={1}>
            <Tools $cols="36px 36px 36px 10px 48px">
              <Tool n="move" /><Tool n="rotate" /><Tool n="trim" /><Drop /><Tool n="brush" />
              <Tool n="copy" /><Tool n="mirror" /><Tool n="fillet" /><Drop /><Tool n="explode" />
              <Tool n="stretch" /><Tool n="scale" /><Tool n="array" /><Drop /><Tool n="offset" />
            </Tools>
          </PanelBody>
          <PanelTitle>修改<Caret /></PanelTitle>
        </Panel>
        <Panel $w={158}>
          <PanelBody $pad={3}>
            <Big $w={56}>
              <BigArt><text x="20" y="37" textAnchor="middle" fontSize="48" fill="#e6e6e6" fontFamily="Noto Sans">A</text></BigArt>文字<BigCaret $s={4} />
            </Big>
            <Big $w={48}>
              <BigArt>
                <path d="M4 2v35M37 2v35" stroke="#ddd" strokeWidth="1.5" />
                <path d="M7 8h27M11 4 6 8l5 4M30 4l5 4-5 4" fill="none" stroke="#5e9bf0" strokeWidth="2" />
                <g fill="#f5b02a" stroke="#8a5a10" strokeWidth=".5"><path d="m20 20 2 6h-4zM13 23l4 5-4 1zM28 23l-1 6-4-1zM8 31l6-1v4H9zM33 31l-6-1v4h5z" /></g>
              </BigArt>标注
            </Big>
            <Tools $cols="34px 10px">
              <Tool n="lin" /><Drop /><Tool n="leader" /><Drop /><Tool n="table" />
            </Tools>
          </PanelBody>
          <PanelTitle>注释<Caret /></PanelTitle>
        </Panel>
        <Panel $w={315}>
          <PanelBody $pad={2}>
            <Big $w={48}>
              <BigArt>
                <g fill="#f2f2f2" stroke="#333" strokeWidth=".7"><path d="M3 24h15l7-9H10zM3 18h15l7-8H10zM3 12h15l8-10H11z" /></g>
                <path d="M23 17h15v21H23z" fill="#eef1f6" stroke="#445" /><path d="M26 20h6v6h-6z" fill="#3a6ab8" /><path d="M26 30h9M26 34h9" stroke="#446" strokeWidth="1.5" />
              </BigArt>
              <span>图层</span><span>特性</span>
            </Big>
            <LayerCol>
              <LayerCombo>
                <Icon n="bulb" s={20} />
                <Icon n="sun" s={26} />
                <Icon n="lock" s={20} />
                <Swatch $s={18} $m="0 6px 0 7px" />
                <select aria-label="layer"><option>0</option></select>
                <Caret />
              </LayerCombo>
              <Tools $cols="repeat(5, 30px)">
                {["l1", "l2", "l3", "l4", "l5", "l6", "l7", "l8", "l9", "l10"].map((n) => <Tool key={n} n={n} s={22} />)}
              </Tools>
            </LayerCol>
          </PanelBody>
          <PanelTitle>图层<Caret /></PanelTitle>
        </Panel>
        <Panel $w={100}>
          <PanelBody $pad={1}>
            <Big $w={50}>
              <BigArt>
                <path d="M18 1h13l7 7v19H18z" fill="#a9c9f0" stroke="#445" /><path d="M31 1v7h7" fill="#fff" />
                <path d="M4 13h24v16H4z" fill="#e8e8ee" stroke="#333" /><circle cx="27" cy="27" r="9" fill="#ccd0d8" stroke="#333" /><N x={4} y={29} />
              </BigArt>插入<BigCaret $s={4} />
            </Big>
            <Tools $cols="32px 12px">
              <Tool n="b1" /><span /><Tool n="b2" /><span /><Tool n="b3" /><Drop />
            </Tools>
          </PanelBody>
          <PanelTitle>块<Caret /></PanelTitle>
        </Panel>
        <Panel $w={251}>
          <PanelBody $pad={2}>
            <Big $w={48}>
              <BigArt>
                <path d="M4 2h24v36H4z" fill="#f2f4f8" stroke="#445" /><path d="M7 5h13v12H7z" fill="#2f62a8" /><path d="M22 5h3v12h-3z" fill="#888" /><path d="M7 24h14M7 31h10M12 20v6" stroke="#334" strokeWidth="1.5" />
                <path d="m20 30 6-4 7 6-8 6q-4 0-6-4z" fill="#b8642a" stroke="#5a2e10" strokeWidth=".7" /><path d="m28 28 10-8-6 12z" fill="#d8c8b0" />
              </BigArt>
              <span>特性</span><span>匹配</span>
            </Big>
            <Tools $cols="28px">
              <Tool n="wheel" />
              <button aria-label="lineweight list"><svg width="20" height="22"><path d="M0 2h20" stroke="#ddd" /><path d="M0 7h20" stroke="#ddd" strokeWidth="2" /><path d="M0 13h20" stroke="#ddd" strokeWidth="3" /><path d="M0 19h20" stroke="#ddd" strokeWidth="5" /></svg></button>
              <button aria-label="linetype list"><svg width="20" height="20"><path d="M0 2h20M0 14h20" stroke="#ddd" strokeDasharray="2 1" /><path d="M0 6h20" stroke="#ddd" strokeDasharray="4 1" /><path d="M0 10h20" stroke="#ddd" strokeWidth="1.5" /><path d="M0 18h20" stroke="#ddd" strokeDasharray="5 2" /></svg></button>
            </Tools>
            <ComboStack>
              <Combo><Swatch $s={20} $m="0 12px 0 7px" /><select aria-label="color"><option>ByLayer</option></select><Caret /></Combo>
              <Combo><LineSample /><select aria-label="lineweight"><option>ByLayer</option></select><Caret /></Combo>
              <Combo><LineSample /><select aria-label="linetype"><option>ByLayer</option></select><Caret /></Combo>
            </ComboStack>
          </PanelBody>
          <PanelTitle>特性<Caret /><Launcher $offset={86}><Icon n="launch" s={11} /></Launcher></PanelTitle>
        </Panel>
        <Panel $w={85}>
          <PanelBody $pad={3}>
            <Big $w={48}>
              <BigArt>
                <path d="M1 2h24v38H1z" fill="none" stroke="#ddd" strokeDasharray="3 1" />
                <path d="M6 7h12v12H6z" fill="#f0e878" stroke="#333" /><circle cx="13" cy="31" r="6.5" fill="#e4ecee" stroke="#333" />
                <path d="M26 1v28M11 15h28M17 6l18 18M35 6 17 24" stroke="#a8d8ff" strokeWidth="1.5" /><path d="m26 6 2 6 7-2-4 5 5 5-7-2-3 7-2-7-7 2 4-5-5-5 7 2z" fill="#d8f0ff" />
              </BigArt>组
            </Big>
            <Tools $cols="31px">
              <Tool n="g1" /><Tool n="g2" /><ToolActive aria-label="group selection"><Icon n="g3" s={20} /></ToolActive>
            </Tools>
          </PanelBody>
          <PanelTitle>组<Caret /></PanelTitle>
        </Panel>
        <Panel $w={96}>
          <PanelBody $pad={7}>
            <Big $w={50}>
              <BigArt>
                <path d="M2 11v11M38 11v11M4 16h32M8 13l-4 3 4 3M32 13l4 3-4 3" fill="none" stroke="#ddd" strokeWidth="1.5" />
                <path d="M2 24h36v8H2z" fill="#f0b832" stroke="#7a5a10" strokeWidth=".6" /><path d="M6 24v3M10 24v4M14 24v3M18 24v4M22 24v3M26 24v4M30 24v3M34 24v4" stroke="#7a5a10" />
              </BigArt>测量<BigCaret $s={4} />
            </Big>
            <Tools $cols="38px"><Tool n="u1" /><Tool n="u2" /><Tool n="u3" /></Tools>
          </PanelBody>
          <PanelTitle>实用工具<Caret /></PanelTitle>
        </Panel>
        <ClipPanel>
          <BigArt>
            <path d="M6 4h27v30H6z" fill="#b0a498" stroke="#333" /><path d="M12 5q2 0 3-3h8q1 3 3 3v3H12z" fill="#f0f0f0" stroke="#444" />
            <path d="M15 12h14l7 7v19H15z" fill="#f2f2f6" stroke="#333" /><path d="M29 12v7h7z" fill="#ccc" stroke="#333" />
          </BigArt>
          剪贴板
          <Caret />
        </ClipPanel>
        <Panel $w={77}>
          <PanelBody>
            <Big $w={77}>
              <BigArt><path d="M4 9h15v7h17v16H4z" fill="#eeeef4" stroke="#444" /></BigArt>基点<BigCaret $s={4} />
            </Big>
          </PanelBody>
          <PanelTitle>视图<Caret /><Icon n="launch" s={11} /></PanelTitle>
        </Panel>
      </Ribbon>
      <Strip />
    </>
  );
}

function Palette() {
  return (
    <Sidebar>
      <SideTitle>T20...</SideTitle>
      {side.map((g, i) => (
        <SideGroup key={i} $top={g.top}>
          {g.rows.map(([n, t], j) => (
            <SideRow key={t + j} $on={i === 1 && j === 0}><span><Icon n={n} s={21} /></span>{t}</SideRow>
          ))}
        </SideGroup>
      ))}
      <Pointer width="30" height="38" viewBox="0 0 30 38">
        <circle cx="13" cy="11" r="9" fill="none" stroke="#e8342c" strokeWidth="3" opacity=".9" />
        <path d="M13 11v20l5-4 3 7 4-2-3-6h6z" fill="#fff" stroke="#222" />
      </Pointer>
    </Sidebar>
  );
}

function Drawing() {
  return (
    <Canvas>
      <ViewLabel>[−][俯视][二维线框]</ViewLabel>
      <Placed $at="89px auto auto 472px">
        <svg width="536" height="378" fill="none" stroke="#bcbebc" strokeWidth="5">
          <rect x="3" y="4" width="530" height="371" />
          <rect x="20" y="21" width="497" height="337" />
        </svg>
      </Placed>
      <Placed $at="auto auto 0 6px">
        <svg width="100" height="116" fill="none" stroke="#c0c0c0" strokeWidth="2">
          <path d="M10 38v62h63M4 94h12v12H4z" />
          <g fill="#c0c0c0" stroke="none" fontFamily="Noto Sans" fontSize="25"><text x="12" y="34">Y</text><text x="79" y="100">X</text></g>
        </svg>
      </Placed>
      <Placed $at="10px 8px auto auto">
        <svg width="112" height="112" viewBox="0 0 112 112" fill="#a0a0a0" fontFamily="Noto Sans CJK SC" fontSize="14" textAnchor="middle">
          <circle cx="56" cy="53" r="42" fill="none" stroke="#2c2c2c" strokeWidth="9" />
          <rect x="36" y="33" width="40" height="40" fill="#aeb0b0" />
          <rect x="43" y="41" width="25" height="25" fill="#9fa3a6" />
          <text x="56" y="62" fontSize="24" fill="#555">上</text>
          <text x="56" y="16">北</text><text x="56" y="103">南</text><text x="13" y="59">西</text><text x="99" y="59">东</text>
        </svg>
      </Placed>
      <Placed $at="131px 34px auto auto"><Wcs>WCS<Caret $s={4} $c="#a8a8b4" /></Wcs></Placed>
      <Placed $at="185px 4px auto auto">
        <svg width="40" height="266" viewBox="0 0 40 266" fill="none" stroke="#262626" strokeWidth="1.4">
          <rect width="40" height="266" rx="4" fill="#404040" stroke="none" />
          <circle cx="33" cy="6" r="4" /><path d="m30 9 6-6" />
          <path d="M20 25h13v13a13 13 0 1 1-13-13z" /><circle cx="20" cy="38" r="8" /><path d="m11 47 4-4M29 47l-4-4" />
          <path d="M18 62h5l-2.500 2z" fill="#222" />
          <path d="M6 70h29" stroke="#4a4a4a" />
          <path d="M15 104 7 91q0-3 3-2l4 4-2-12q2-3 4 0l2 8 1-11q2-2 4 0v11l4-9q3-1 3 2l-3 11 4-4q3 0 2 3l-7 12z" />
          <path d="m7 114 16 16M23 113 7 130M6 119v-6h6M18 112h6v6M6 125v6h6" /><circle cx="25" cy="130" r="6" /><path d="m30 134 5 6" strokeWidth="3" />
          <path d="M18 149h5l-2.500 2z" fill="#222" />
          <path d="M17 164h5v22h-5zM15 165l4.500-5 4.500 5" /><path d="M15 169c-16 5-8 11 5 11 18 0 18-9 5-11M14 176l-5 4 6 3" />
          <path d="M18 197h5l-2.500 2z" fill="#222" />
          <path d="M6 205h29" stroke="#4a4a4a" />
          <path d="M6 212h7v8H6zM16 212h7v8h-7zM26 212h7v8h-7zM6 224h19v16H6z" /><path d="m11 227 9 5-9 5z" fill="#222" />
          <circle cx="33" cy="258" r="4" /><path d="M30 258h6" />
        </svg>
      </Placed>
    </Canvas>
  );
}

export default function App() {
  return (
    <Shell>
      <Global />
      <TopBars />
      <RibbonArea />
      <Main>
        <Palette />
        <Work>
          <Drawing />
          <CommandBox>
            <CommandGrip>
              <svg width="22" height="8"><path d="M0 1h22M0 4h22M0 7h22" stroke="#bbb" strokeDasharray="1 2" /></svg>
              <button aria-label="close command line"><svg width="12" height="12"><path d="m1 1 10 10M11 1 1 11" stroke="#f0f0f0" strokeWidth="2.2" /></svg></button>
              <button aria-label="customize command line"><svg width="20" height="20" viewBox="0 0 20 20"><path d="M1 5 5 7 8 5 6 1q5-1 6 3v3l7 8q0 4-4 3L8 11Q2 12 1 5z" fill="#f0f0f0" /></svg></button>
            </CommandGrip>
            <CommandMain>
              <History>
                <div>起点或<Latin> [</Latin>参考点<Latin>(R)]&lt;</Latin>退出<Latin>&gt;:</Latin></div>
                <div>命令<Latin>:</Latin></div>
              </History>
              <Prompt>
                <svg width="19" height="18"><rect x=".5" y=".5" width="18" height="17" fill="#dfe3ec" stroke="#8a90a0" /><path d="m4 5 4 4-4 4M10 13h5" fill="none" stroke="#445" strokeWidth="1.6" /></svg>
                <Caret $s={4} $c="#888" />
                <input aria-label="command" placeholder="键入命令" />
              </Prompt>
            </CommandMain>
          </CommandBox>
        </Work>
      </Main>
      <SheetRow>
        <Sheets>
          <Sheet $on $w={62}>模型</Sheet>
          <Sheet $w={64}>布局1</Sheet>
          <Sheet $w={67}>布局2</Sheet>
          <Sheet $w={36} aria-label="new layout">
            <svg width="36" height="20"><path d="M18 6v10M13 11h10" stroke="#d0d0d0" strokeWidth="2.4" /></svg>
          </Sheet>
        </Sheets>
        <Readout>
          <ScaleButton>比例 1:100<Caret $s={4} /></ScaleButton>
          <Coordinates>71629, 21911, 0</Coordinates>
        </Readout>
      </SheetRow>
      <StatusBar>
        {status.map((g, i) => (
          <StatusGroup key={i} $gap={g.gap}>{g.items.map((id, j) => <StatusItem key={j} id={id} />)}</StatusGroup>
        ))}
      </StatusBar>
      <Watermark>
        <svg width="288" height="148" viewBox="0 0 288 148" fill="#fff" opacity=".76">
          <g stroke="#8c8c8c" strokeOpacity=".5" strokeWidth="1">
            <ellipse cx="110" cy="42" rx="10.5" ry="14" /><ellipse cx="131" cy="22" rx="10" ry="14" />
            <ellipse cx="156" cy="24" rx="10" ry="13.5" transform="rotate(12 156 24)" /><ellipse cx="172" cy="48" rx="11" ry="13.5" />
            <path d="M140 44c12 0 14 13 23 21 8 7 14 14 12 22-2 8-9 12-17 11-7-1-11-2-18-2s-12 2-19 1c-9-1-15-6-15-15 0-8 7-13 13-19 9-8 10-19 21-19z" />
            <g fontWeight="700" fontFamily="Liberation Sans">
              <text x="0" y="96" fontSize="63">Bai</text>
              <text x="115" y="87" fontSize="40" strokeWidth="2" strokeOpacity=".9">du</text>
              <text x="186" y="92" fontSize="48" fontFamily="Noto Sans CJK SC">经验</text>
            </g>
            <text x="4" y="134" fontSize="34" fontFamily="Noto Sans" strokeWidth=".5">jingyan.baidu.com</text>
          </g>
        </svg>
      </Watermark>
    </Shell>
  );
}
